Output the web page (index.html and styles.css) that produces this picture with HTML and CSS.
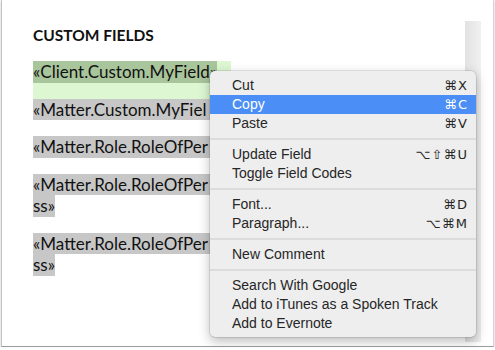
FILE: index.html
```html
<!DOCTYPE html>
<html>
<head>
  <title>Custom Fields</title>
  <link rel="stylesheet" href="styles.css">
</head>
<body>
  <div class="window">
    <div class="doc">
      <h1>CUSTOM FIELDS</h1>

      <div class="field field-active">
        <span class="hl hl-green">«Client.Custom.MyField»</span>
      </div>
      <div class="field">
        <span class="hl under">«Matter.Custom.MyFiel</span>
      </div>
      <div class="field">
        <span class="hl under">«Matter.Role.RoleOfPer</span>
      </div>
      <div class="field">
        <span class="hl under">«Matter.Role.RoleOfPer</span><br>
        <span class="hl">ss»</span>
      </div>
      <div class="field">
        <span class="hl under">«Matter.Role.RoleOfPer</span><br>
        <span class="hl">ss»</span>
      </div>
    </div>

    <div class="scrollbar"></div>

    <!-- context menu -->
    <div class="menu">
      <div class="item"><span>Cut</span><span class="key">⌘X</span></div>
      <div class="item selected"><span>Copy</span><span class="key">⌘C</span></div>
      <div class="item"><span>Paste</span><span class="key">⌘V</span></div>
      <div class="sep"></div>
      <div class="item"><span>Update Field</span><span class="key">⌥⇧⌘U</span></div>
      <div class="item"><span>Toggle Field Codes</span></div>
      <div class="sep"></div>
      <div class="item"><span>Font...</span><span class="key">⌘D</span></div>
      <div class="item"><span>Paragraph...</span><span class="key">⌥⌘M</span></div>
      <div class="sep"></div>
      <div class="item"><span>New Comment</span></div>
      <div class="sep"></div>
      <div class="item"><span>Search With Google</span></div>
      <div class="item"><span>Add to iTunes as a Spoken Track</span></div>
      <div class="item"><span>Add to Evernote</span></div>
    </div>
  </div>
</body>
</html>
```

FILE: styles.css
```css
body {
  margin: 0;
  background: #fff;
}

.window {
  position: relative;
  display: flex;
  width: 491px;
  height: 346px;
  margin-left: 1px;
  background: #fff;
  border-left: 1px solid #c4c4c4;
  border-right: 1px solid #d4d4d4;
  border-bottom: 1px solid #9c9c9c;
  box-shadow: 0 1px 2px rgba(0, 0, 0, 0.25);
}

.doc {
  flex: 1;
  padding: 26px 0 0 31px;
  font-family: Lato, "Liberation Sans", sans-serif;
  color: #111;
}

.doc h1 {
  font-size: 15.5px;
  font-weight: bold;
  margin: 0 0 17px;
  line-height: 18px;
}

.field {
  font-size: 17px;
  line-height: 21.5px;
  padding-bottom: 16px;
  white-space: nowrap;
}

.field-active {
  width: 198px;
  background: #ddf7d3;
}

.hl {
  display: inline-block;
  height: 21.5px;
  background: #c7c7c7;
}

/* shading runs on under the menu */
.hl.under {
  padding-right: 14px;
}

.hl-green {
  background: #a9c59c;
}

.scrollbar {
  width: 16px;
  margin: 21px 12px 4px 0;
  background: linear-gradient(to right, #e2e2e2, #f0f0f0);
}

.menu {
  position: absolute;
  left: 208px;
  top: 71px;
  width: 266px;
  padding: 5px 0 4px;
  background: #eeeeee;
  border-radius: 5px;
  box-shadow: 0 0 0 0.5px rgba(0, 0, 0, 0.18), 0 4px 12px rgba(0, 0, 0, 0.28);
  font-family: "Liberation Sans", "DejaVu Sans", sans-serif;
  font-size: 14px;
  color: #262626;
}

.item {
  display: flex;
  justify-content: space-between;
  height: 19px;
  line-height: 19px;
  padding: 0 8px 0 22px;
}

.item.selected {
  background: #4b8ff6;
  color: #fff;
}

.key {
  font-family: "DejaVu Sans", sans-serif;
  font-size: 13px;
  letter-spacing: 1px;
}

.sep {
  height: 2px;
  margin: 5px 0;
  background: #dcdcdc;
}
```
